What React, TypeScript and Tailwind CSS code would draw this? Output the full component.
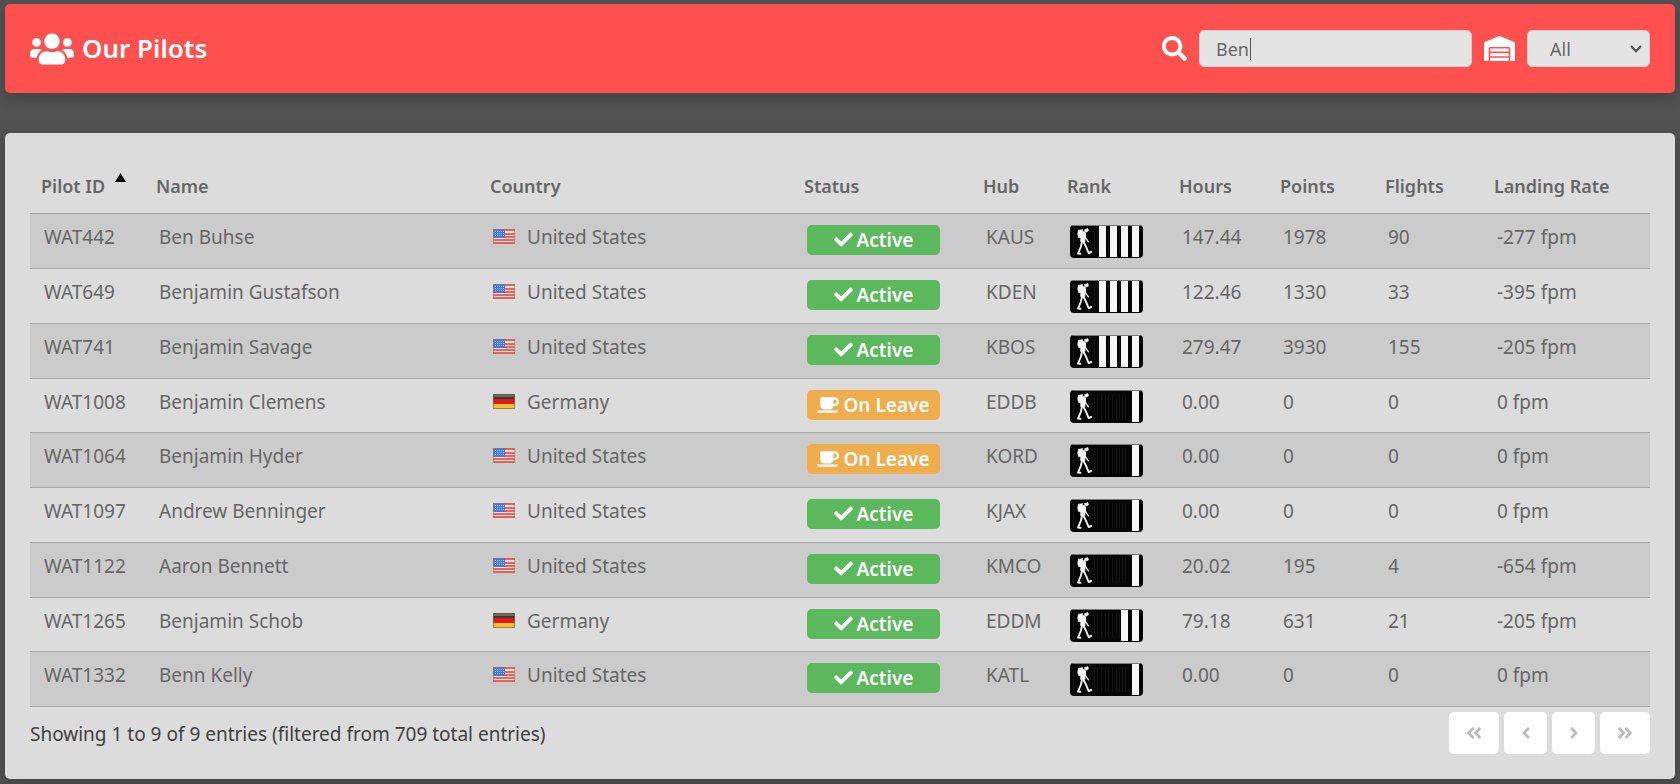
import { useState } from 'react';
import {
  FaAngleDoubleLeft,
  FaAngleDoubleRight,
  FaAngleLeft,
  FaAngleRight,
  FaCheck,
  FaCoffee,
  FaSearch,
  FaUsers,
  FaWarehouse,
} from 'react-icons/fa';

type Pilot = {
  id: string;
  name: string;
  country: 'United States' | 'Germany';
  status: 'Active' | 'On Leave';
  hub: string;
  bars: number;
  hours: string;
  points: number;
  flights: number;
  landing: number;
};

const TOTAL_PILOTS = 709;

const pilots: Pilot[] = [
  { id: 'WAT442', name: 'Ben Buhse', country: 'United States', status: 'Active', hub: 'KAUS', bars: 4, hours: '147.44', points: 1978, flights: 90, landing: -277 },
  { id: 'WAT649', name: 'Benjamin Gustafson', country: 'United States', status: 'Active', hub: 'KDEN', bars: 4, hours: '122.46', points: 1330, flights: 33, landing: -395 },
  { id: 'WAT741', name: 'Benjamin Savage', country: 'United States', status: 'Active', hub: 'KBOS', bars: 4, hours: '279.47', points: 3930, flights: 155, landing: -205 },
  { id: 'WAT1008', name: 'Benjamin Clemens', country: 'Germany', status: 'On Leave', hub: 'EDDB', bars: 1, hours: '0.00', points: 0, flights: 0, landing: 0 },
  { id: 'WAT1064', name: 'Benjamin Hyder', country: 'United States', status: 'On Leave', hub: 'KORD', bars: 1, hours: '0.00', points: 0, flights: 0, landing: 0 },
  { id: 'WAT1097', name: 'Andrew Benninger', country: 'United States', status: 'Active', hub: 'KJAX', bars: 1, hours: '0.00', points: 0, flights: 0, landing: 0 },
  { id: 'WAT1122', name: 'Aaron Bennett', country: 'United States', status: 'Active', hub: 'KMCO', bars: 1, hours: '20.02', points: 195, flights: 4, landing: -654 },
  { id: 'WAT1265', name: 'Benjamin Schob', country: 'Germany', status: 'Active', hub: 'EDDM', bars: 2, hours: '79.18', points: 631, flights: 21, landing: -205 },
  { id: 'WAT1332', name: 'Benn Kelly', country: 'United States', status: 'Active', hub: 'KATL', bars: 1, hours: '0.00', points: 0, flights: 0, landing: 0 },
];

const columns = [
  { label: 'Pilot ID', width: 'w-[115px]' },
  { label: 'Name', width: 'w-[334px]' },
  { label: 'Country', width: 'w-[314px]' },
  { label: 'Status', width: 'w-[179px]' },
  { label: 'Hub', width: 'w-[84px]' },
  { label: 'Rank', width: 'w-[112px]' },
  { label: 'Hours', width: 'w-[101px]' },
  { label: 'Points', width: 'w-[105px]' },
  { label: 'Flights', width: 'w-[109px]' },
  { label: 'Landing Rate', width: 'w-[167px]' },
];

const pages = [
  { label: 'First page', icon: <FaAngleDoubleLeft size={18} />, width: 'w-[50px]' },
  { label: 'Previous page', icon: <FaAngleLeft size={18} />, width: 'w-[43px]' },
  { label: 'Next page', icon: <FaAngleRight size={18} />, width: 'w-[43px]' },
  { label: 'Last page', icon: <FaAngleDoubleRight size={18} />, width: 'w-[50px]' },
];

function Flag({ country }: { country: Pilot['country'] }) {
  if (country === 'Germany') {
    return (
      <svg width="22" height="15" viewBox="0 0 22 15" aria-hidden="true">
        <rect width="22" height="5" fill="#3c3a36" />
        <rect y="5" width="22" height="5" fill="#e01818" />
        <rect y="10" width="22" height="5" fill="#f2c230" />
        <rect x="1" y="1" width="20" height="2" fill="#6d6b66" />
        <rect x="0.5" y="0.5" width="21" height="14" fill="none" stroke="#7a6a3a" strokeOpacity="0.7" />
      </svg>
    );
  }
  return (
    <svg width="22" height="15" viewBox="0 0 22 15" aria-hidden="true">
      <rect width="22" height="15" fill="#f9e3df" />
      {[0, 4, 7, 10, 13].map((y) => (
        <rect key={y} y={y} width="22" height="2" fill="#f2605a" />
      ))}
      <rect width="12" height="9" fill="#3f78e0" />
      {[2, 4, 6].map((y) => (
        <path key={y} d={`M2 ${y + 0.5}h9`} stroke="#a9c8fb" strokeDasharray="1 1" />
      ))}
      <rect x="0.5" y="0.5" width="21" height="14" fill="none" stroke="#b8685c" strokeOpacity="0.6" />
    </svg>
  );
}

function RankBadge({ bars }: { bars: number }) {
  return (
    <svg width="73" height="33" viewBox="0 0 73 33" role="img" aria-label={`${bars} bar rank`} className="rounded">
      <rect width="73" height="33" fill="#050505" />
      {[3, 24, 27, 31, 35, 38, 42, 46, 49, 52, 55].map((x) => (
        <rect key={x} x={x} y="4" width="1" height="25" fill="#161616" />
      ))}
      <g fill="#f4f4f4" stroke="#f4f4f4" strokeLinecap="round" strokeLinejoin="round">
        <path d="M14.8 4.4L18 3.6L18.4 6L16.6 7L15.2 6.4Z" strokeWidth="0.6" />
        <path d="M8.4 5.4L12.6 4.4L12 13L8.4 12.4Q7 8.6 8.4 5.4Z" strokeWidth="0.6" />
        <path d="M12 7L15 6.6L15.6 9L14.8 16.8L10.6 16.4Q10.6 11 12 7Z" strokeWidth="0.8" />
        <path d="M14.8 9.5L15.8 13.2L18.4 16.8" fill="none" strokeWidth="1.3" />
        <path d="M12 16.8L10.8 22L8 28.6L10.4 28.8" fill="none" strokeWidth="1.9" />
        <path d="M13.4 16.8L16 21.6L18.6 28L21.2 27" fill="none" strokeWidth="1.9" />
      </g>
      {Array.from({ length: bars }, (_, i) => (
        <rect key={i} x={62 - i * 11} y="1" width="7" height="31" fill="#f6f6f6" />
      ))}
      <path d="M0 0.5H73" stroke="#777777" />
    </svg>
  );
}

function StatusBadge({ status }: { status: Pilot['status'] }) {
  const active = status === 'Active';
  return (
    <span
      className={`flex h-[30px] w-[133px] items-center justify-center gap-1 rounded-[5px] font-semibold text-white ${
        active ? 'bg-[#5cb85c]' : 'bg-[#f0ad4e]'
      }`}
    >
      {active ? <FaCheck size={19} /> : <FaCoffee size={22} />}
      {status}
    </span>
  );
}

export default function App() {
  const [query, setQuery] = useState('Ben');
  const [hub, setHub] = useState('All');

  const rows = pilots.filter(
    (p) => p.name.toLowerCase().includes(query.toLowerCase()) && (hub === 'All' || p.hub === hub),
  );

  return (
    <div className="min-h-screen bg-[#525252] px-[5px] pt-1 pb-1 font-['Noto_Sans',sans-serif]">
      <header className="flex h-[89px] items-center justify-between rounded-[5px] bg-[#ff5050] px-[25px] text-white shadow-[0_5px_15px_rgba(0,0,0,0.2)]">
        <h1 className="flex items-center gap-2 text-[26px] font-semibold">
          <FaUsers size={44} />
          Our Pilots
        </h1>
        <div className="flex items-center gap-3">
          <label htmlFor="search" aria-label="Search pilots">
            <FaSearch size={25} />
          </label>
          <div className="relative">
            <input
              id="search"
              type="text"
              value={query}
              onChange={(e) => setQuery(e.target.value)}
              className="block h-[37px] w-[273px] rounded-[5px] border border-[#cccccc] bg-[#e4e4e4] px-4 text-lg text-[#666666] outline-none"
            />
            <span className="absolute top-2 left-[51px] h-[22px] w-px bg-[#555555]" />
          </div>
          <label htmlFor="hub" aria-label="Hub">
            <FaWarehouse size={31} />
          </label>
          <div className="relative">
            <select
              id="hub"
              value={hub}
              onChange={(e) => setHub(e.target.value)}
              className="block h-[37px] w-[123px] appearance-none rounded-[5px] border border-[#cccccc] bg-[#e4e4e4] px-[22px] text-lg text-[#666666] outline-none"
            >
              <option>All</option>
              {pilots.map((p) => (
                <option key={p.hub}>{p.hub}</option>
              ))}
            </select>
            <svg
              width="12"
              height="8"
              viewBox="0 0 12 8"
              className="pointer-events-none absolute top-[15px] right-2"
              aria-hidden="true"
            >
              <path d="M1.5 1.5L6 6.3L10.5 1.5" fill="none" stroke="#4f4f4f" strokeWidth="2" strokeLinecap="round" />
            </svg>
          </div>
        </div>
      </header>

      <main className="mt-10 rounded-[5px] bg-[#dcdcdc] p-[25px] shadow-[0_5px_15px_rgba(0,0,0,0.2)]">
        <table className="w-full table-fixed border-collapse text-left text-[19px] leading-6 text-[#666666]">
          <colgroup>
            {columns.map((c) => (
              <col key={c.label} className={c.width} />
            ))}
          </colgroup>
          <thead>
            <tr className="h-[55px] border-b border-[#a0a0a0]">
              {columns.map((c, i) => (
                <th
                  key={c.label}
                  scope="col"
                  className="pt-[15px] pl-[11px] align-top text-lg leading-[26px] font-semibold whitespace-nowrap"
                >
                  <span className="flex items-start gap-2.5">
                    {c.label}
                    {i === 0 && (
                      <svg width="11" height="9" viewBox="0 0 11 9" aria-hidden="true">
                        <path d="M5.5 0L11 9H0Z" fill="#000000" />
                      </svg>
                    )}
                  </span>
                </th>
              ))}
            </tr>
          </thead>
          <tbody>
            {rows.map((p) => (
              <tr
                key={p.id}
                className="h-[55px] border-b border-[#a8a8a8] align-top odd:bg-[#cbcbcb] [&:nth-child(4n)]:h-[54px]"
              >
                <td className="pt-[11px] pl-3.5">{p.id}</td>
                <td className="pt-[11px] pl-3.5">{p.name}</td>
                <td className="pt-[11px] pl-3.5">
                  <span className="flex items-center gap-3">
                    <Flag country={p.country} />
                    {p.country}
                  </span>
                </td>
                <td className="pt-[11px] pl-3.5">
                  <StatusBadge status={p.status} />
                </td>
                <td className="pt-[11px] pl-3.5">{p.hub}</td>
                <td className="pt-[11px] pl-3.5">
                  <RankBadge bars={p.bars} />
                </td>
                <td className="pt-[11px] pl-3.5">{p.hours}</td>
                <td className="pt-[11px] pl-3.5">{p.points}</td>
                <td className="pt-[11px] pl-3.5">{p.flights}</td>
                <td className="pt-[11px] pl-3.5">{p.landing} fpm</td>
              </tr>
            ))}
          </tbody>
        </table>

        <div className="flex items-start justify-between pt-[5px]">
          <p className="pt-2.5 text-[19px] leading-6 text-[#404040]">
            Showing 1 to {rows.length} of {rows.length} entries (filtered from {TOTAL_PILOTS} total entries)
          </p>
          <nav className="flex gap-[5px]" aria-label="Pagination">
            {pages.map((b) => (
              <button
                key={b.label}
                type="button"
                aria-label={b.label}
                className={`flex h-[42px] items-center justify-center rounded-[5px] bg-white text-[#bbbbbb] ${b.width}`}
              >
                {b.icon}
              </button>
            ))}
          </nav>
        </div>
      </main>
    </div>
  );
}
